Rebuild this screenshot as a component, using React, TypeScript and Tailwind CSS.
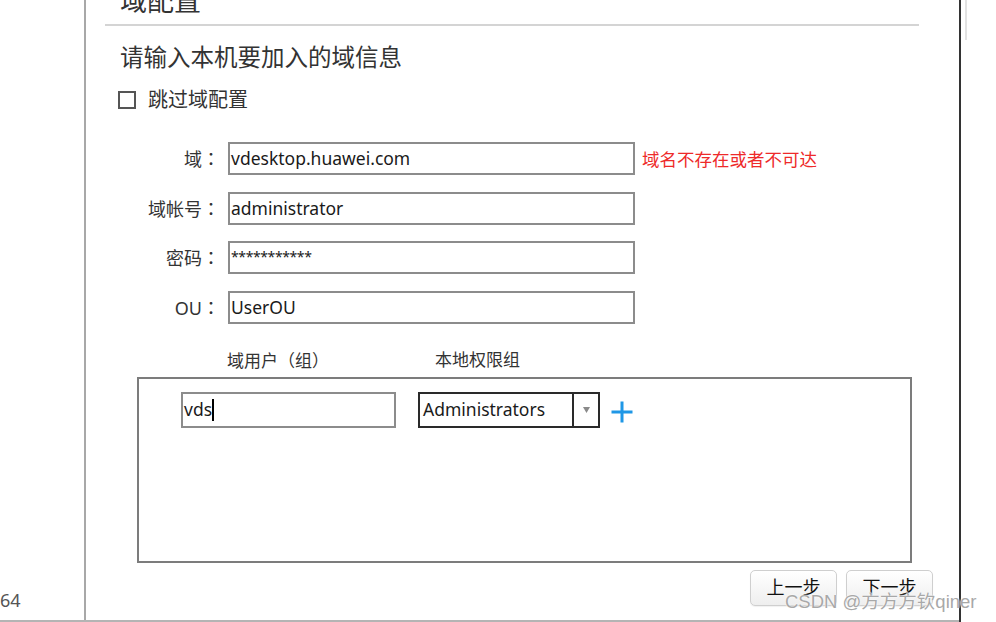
import React from "react";

const TC = "font-['Noto_Sans_CJK_TC',sans-serif]";

function Field({ label, children, extra }: { label: string; children: React.ReactNode; extra?: React.ReactNode }) {
  return (
    <div className="flex items-center h-[33px]">
      <div className="w-[134px] text-right text-[18px] leading-[24px] text-[#333]">
        {label}
        <span className="font-['Noto_Sans_CJK_TC',sans-serif]">：</span>
      </div>
      <div className="ml-[8px] w-[407px] h-[33px] border-2 border-[#8c8c8c] bg-white flex items-center pl-[1px] text-[17.5px] text-[#1a1a1a]">
        {children}
      </div>
      {extra}
    </div>
  );
}

export default function App() {
  return (
    <div className="relative w-[996px] h-[622px] bg-white flex overflow-hidden font-['Noto_Sans','Noto_Sans_CJK_SC',sans-serif]">
      <div className="flex w-[959px] h-[622px] border-b-2 border-[#b4b4b4]">
        <div className="w-[84px] flex flex-col justify-end pb-[8px]">
          <span className="text-[18px] leading-[24px] text-[#555]">64</span>
        </div>
        <div className="w-[2px] bg-[#a8a8a8]" />
        <main className="w-[873px] flex flex-col">
          <div className="ml-[19px] w-[814px] h-[26px] border-b-2 border-[#d4d4d4] pl-[15px]">
            <div className="-mt-[12px] text-[27px] leading-[26px] text-[#333]">域配置</div>
          </div>
          <div className="mt-[16px] pl-[34px] text-[23.5px] leading-[30px] text-[#333]">请输入本机要加入的域信息</div>
          <div className="mt-[16px] pl-[32px] flex items-center h-[24px]">
            <div className="w-[18px] h-[18px] border-2 border-[#555]" />
            <span className="ml-[12px] text-[20px] leading-[24px] text-[#333]">跳过域配置</span>
          </div>
          <div className="mt-[30px] flex flex-col gap-[16.5px]">
            <Field
              label="域"
              extra={<span className="ml-[7px] text-[17.5px] leading-[24px] text-[#ee2a2a]">域名不存在或者不可达</span>}
            >
              vdesktop.huawei.com
            </Field>
            <Field label="域帐号">administrator</Field>
            <Field label="密码">
              <span className="text-[14px] tracking-[-0.4px] pb-[3px]">***********</span>
            </Field>
            <Field label="OU">UserOU</Field>
          </div>
          <div className="mt-[24px] flex h-[24px] text-[17px] leading-[24px] text-[#333]">
            <span className="ml-[141px] w-[208px]">
              域用户<span className={TC}>（</span>组<span className={TC}>）</span>
            </span>
            <span>本地权限组</span>
          </div>
          <div className="mt-[5px] ml-[51px] w-[775px] h-[186px] border-2 border-[#7c7c7c] pt-[13px] pl-[42px]">
            <div className="flex items-center">
              <div className="w-[215px] h-[36px] border-2 border-[#8c8c8c] flex items-center pl-[1px] text-[17.5px] text-[#1a1a1a]">
                vds<span className="w-[1.5px] h-[22px] bg-black" />
              </div>
              <div className="ml-[22px] w-[182px] h-[36px] border-2 border-[#2a2a2a] flex">
                <div className="flex-1 flex items-center pl-[3px] text-[17.5px] text-[#1a1a1a]">Administrators</div>
                <div className="w-[2px] bg-[#2a2a2a]" />
                <div className="w-[24px] flex items-center justify-center">
                  <svg width="7" height="6" viewBox="0 0 7 6">
                    <path d="M0 0 L7 0 L3.5 6 Z" fill="#8a8a8a" />
                  </svg>
                </div>
              </div>
              <svg className="ml-[10px] mt-[4px]" width="24" height="24" viewBox="0 0 24 24">
                <path d="M12 1.5 V22.5 M1.5 12 H22.5" stroke="#1f97e6" strokeWidth="3" />
              </svg>
            </div>
          </div>
          <div className="mt-[7px] flex justify-end gap-[9px] pr-[26px]">
            <button className="w-[87px] h-[36px] rounded-[5px] border border-[#cfcfcf] bg-gradient-to-b from-white to-[#eeeeee] text-[18px] text-[#111] shadow-[0_1px_1px_rgba(0,0,0,0.06)]">
              上一步
            </button>
            <button className="w-[87px] h-[36px] rounded-[5px] border border-[#cfcfcf] bg-gradient-to-b from-white to-[#eeeeee] text-[18px] text-[#111] shadow-[0_1px_1px_rgba(0,0,0,0.06)]">
              下一步
            </button>
          </div>
        </main>
      </div>
      <div className="w-[2px] h-[622px] bg-[#333]" />
      <div className="ml-[4px] w-[2px] h-[40px] bg-[#e2e2e2]" />
      <div className="absolute left-[785px] top-[589px] text-[18.5px] leading-[26px] text-[#a8a8a8] font-['Liberation_Sans','Noto_Sans_CJK_SC',sans-serif] [text-shadow:0_0_2px_#fff,0_0_1px_#fff]">
        CSDN @方方方钦qiner
      </div>
    </div>
  );
}
